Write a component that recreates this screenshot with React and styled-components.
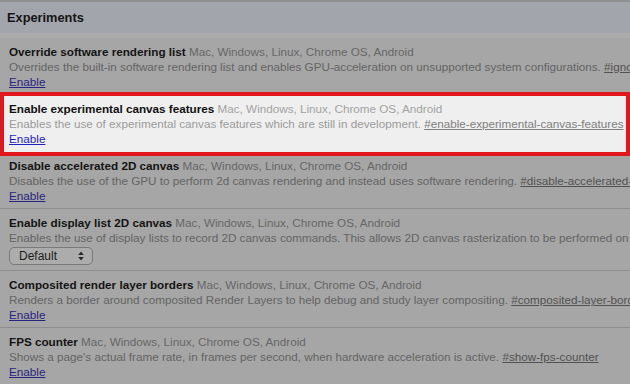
import styled, { createGlobalStyle } from "styled-components"

const GlobalStyle = createGlobalStyle`
    html, body {
        margin:0;
        padding:0;
        background:#a6a6a6;
        overflow:hidden;
    }
    body {
        font-family:"Liberation Sans", Arial, Helvetica, sans-serif;
    }
`

const Page = styled.div`
    width:630px;
    height:384px;
    overflow:hidden;
    border-top:2px solid #8f8f8f;
    box-sizing:border-box;
`

const Header = styled.div`
    height:31px;
    background:#a2a5ab;
    display:flex;
    align-items:center;
    padding:0 7px;
    border-bottom:5px solid #ababab;
`

const HeaderTitle = styled.h2`
    margin:0;
    font-size:12.8px;
    font-weight:700;
    color:#151515;
`

const List = styled.div`
    display:flex;
    flex-direction:column;
`

const Row = styled.div`
    position:relative;
    padding:6px 9px 5px;
    border-bottom:1px solid #8e8e8e;
    font-size:11.7px;
    line-height:15px;
    white-space:nowrap;
    overflow:hidden;
    background:#a6a6a6;

    ${(p) => p.$highlight && `
        background:#efefef;
        border:4px solid #e3161e;
        margin:-3px 0 -4px;
        padding:5px 5px 6px;
        z-index:1;
    `}
`

const Title = styled.span`
    font-weight:700;
    color:${(p) => (p.$light ? "#111" : "#141414")};
`

const Platforms = styled.span`
    color:${(p) => (p.$light ? "#a3a3a3" : "#666")};
`

const Desc = styled.div`
    color:${(p) => (p.$light ? "#9b9b9b" : "#646464")};
`

const Permalink = styled.a`
    color:${(p) => (p.$light ? "#808080" : "#525252")};
    text-decoration:underline;
`

const Action = styled.a`
    display:inline-block;
    color:${(p) => (p.$light ? "#1f1fc4" : "#27247f")};
    text-decoration:underline;
`

const Select = styled.div`
    margin-top:2px;
    width:84px;
    height:18px;
    box-sizing:border-box;
    border:1px solid #7a7a7a;
    border-radius:5px;
    background:#acacac;
    display:flex;
    align-items:center;
    justify-content:space-between;
    padding:0 8px 0 9px;
    color:#1c1c1c;
    font-size:12px;
`

const Arrows = () => (
    <svg width="6" height="10" viewBox="0 0 6 10">
        <path d="M3 0.5 L5.8 4 H0.2 Z M3 9.5 L5.8 6 H0.2 Z" fill="#2a2a2a" />
    </svg>
)

const PLATFORMS = "Mac, Windows, Linux, Chrome OS, Android"

const experiments = [
    {
        name: "Override software rendering list",
        desc: "Overrides the built-in software rendering list and enables GPU-acceleration on unsupported system configurations.",
        hash: "#ignore-gpu-blacklist",
    },
    {
        name: "Enable experimental canvas features",
        desc: "Enables the use of experimental canvas features which are still in development.",
        hash: "#enable-experimental-canvas-features",
        highlight: true,
    },
    {
        name: "Disable accelerated 2D canvas",
        desc: "Disables the use of the GPU to perform 2d canvas rendering and instead uses software rendering.",
        hash: "#disable-accelerated-2d-canvas",
    },
    {
        name: "Enable display list 2D canvas",
        desc: "Enables the use of display lists to record 2D canvas commands. This allows 2D canvas rasterization to be performed on a separate thread.",
        hash: "#enable-display-list-2d-canvas",
        select: true,
    },
    {
        name: "Composited render layer borders",
        desc: "Renders a border around composited Render Layers to help debug and study layer compositing.",
        hash: "#composited-layer-borders",
    },
    {
        name: "FPS counter",
        desc: "Shows a page's actual frame rate, in frames per second, when hardware acceleration is active.",
        hash: "#show-fps-counter",
    },
]

const App = () => {
    return (
        <Page>
            <GlobalStyle />
            <Header>
                <HeaderTitle>Experiments</HeaderTitle>
            </Header>
            <List>
                {experiments.map((e) => (
                    <Row key={e.hash} $highlight={e.highlight}>
                        <div>
                            <Title $light={e.highlight}>{e.name}</Title>{" "}
                            <Platforms $light={e.highlight}>{PLATFORMS}</Platforms>
                        </div>
                        <Desc $light={e.highlight}>
                            {e.desc} <Permalink $light={e.highlight}>{e.hash}</Permalink>
                        </Desc>
                        {e.select ? (
                            <Select>
                                <span>Default</span>
                                <Arrows />
                            </Select>
                        ) : (
                            <div>
                                <Action $light={e.highlight}>Enable</Action>
                            </div>
                        )}
                    </Row>
                ))}
            </List>
        </Page>
    )
}

export default App
